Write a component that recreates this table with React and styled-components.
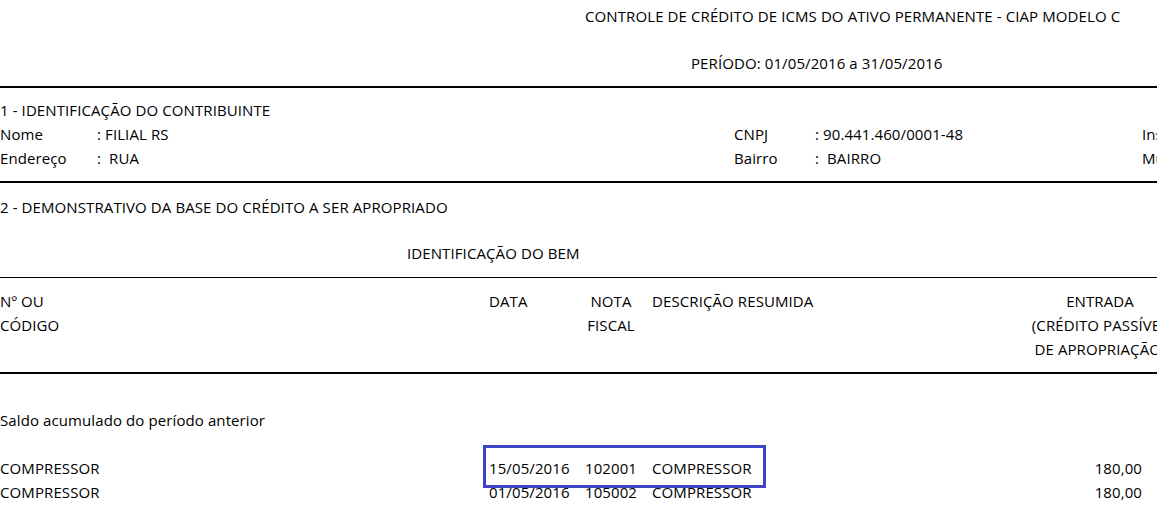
import React from "react";
import styled, { createGlobalStyle } from "styled-components";

const GlobalStyle = createGlobalStyle`
  html, body {
    margin: 0;
    padding: 0;
    background: #ffffff;
  }
  body {
    font-family: "Open Sans", "Noto Sans", sans-serif;
    font-size: 15px;
    letter-spacing: 0.1px;
    line-height: 24px;
    color: #000000;
  }
`;

const Page = styled.div`
  width: 1157px;
  height: 512px;
  overflow: hidden;
  background: #ffffff;
`;

const Report = styled.div`
  width: 1400px;
  padding-top: 4px;
`;

const Title = styled.div`
  padding-left: ${(p) => p.left}px;
  margin-top: ${(p) => p.top || 0}px;
  margin-bottom: ${(p) => p.gap || 0}px;
  white-space: nowrap;
`;

const Rule = styled.hr`
  margin: 0;
  border: 0;
  border-top: ${(p) => (p.thin ? 1 : 2)}px solid #000;
  width: 100%;
`;

const Section = styled.div`
  padding-top: ${(p) => p.top}px;
  padding-bottom: ${(p) => p.bottom}px;
`;

const Spacer = styled.div`
  height: ${(p) => p.h}px;
`;

const InfoGrid = styled.div`
  display: grid;
  grid-template-columns: 97px 637px 81px 327px auto;
  white-space: nowrap;
`;

const TableGrid = styled.div`
  display: grid;
  grid-template-columns: 489px 92px 60px 389px 140px;
  white-space: nowrap;
`;

const Cell = styled.div`
  text-align: ${(p) => p.align || "left"};
  padding-left: ${(p) => p.pl || 0}px;
  padding-right: ${(p) => p.pr || 0}px;
`;

const DataRow = styled(TableGrid)`
  position: relative;
`;

const Highlight = styled.div`
  position: absolute;
  left: 483px;
  top: -11px;
  width: 283px;
  height: 43px;
  box-sizing: border-box;
  border: 3px solid #3d45c6;
  pointer-events: none;
`;

const rows = [
  { code: "COMPRESSOR", date: "15/05/2016", nf: "102001", desc: "COMPRESSOR", value: "180,00", selected: true },
  { code: "COMPRESSOR", date: "01/05/2016", nf: "105002", desc: "COMPRESSOR", value: "180,00" },
];

export default function App() {
  return (
    <Page>
      <GlobalStyle />
      <Report>
        <Title left={585} gap={23}>
          CONTROLE DE CRÉDITO DE ICMS DO ATIVO PERMANENTE - CIAP MODELO C
        </Title>
        <Title left={691} gap={11}>
          PERÍODO: 01/05/2016 a 31/05/2016
        </Title>
        <Rule />

        <Section top={10} bottom={11}>
          <div>1 - IDENTIFICAÇÃO DO CONTRIBUINTE</div>
          <InfoGrid>
            <Cell>Nome</Cell>
            <Cell>: FILIAL RS</Cell>
            <Cell>CNPJ</Cell>
            <Cell>: 90.441.460/0001-48</Cell>
            <Cell>Inscrição Estadual</Cell>
            <Cell>Endereço</Cell>
            <Cell>:&nbsp; RUA</Cell>
            <Cell>Bairro</Cell>
            <Cell>:&nbsp; BAIRRO</Cell>
            <Cell>Município</Cell>
          </InfoGrid>
        </Section>
        <Rule />

        <Section top={12} bottom={12}>
          <div>2 - DEMONSTRATIVO DA BASE DO CRÉDITO A SER APROPRIADO</div>
          <Title left={407} top={22}>
            IDENTIFICAÇÃO DO BEM
          </Title>
        </Section>
        <Rule thin />

        <Section top={11} bottom={11}>
          <TableGrid>
            <Cell>
              Nº OU
              <br />
              CÓDIGO
            </Cell>
            <Cell>DATA</Cell>
            <Cell align="center">
              NOTA
              <br />
              FISCAL
            </Cell>
            <Cell pl={11}>DESCRIÇÃO RESUMIDA</Cell>
            <Cell align="center">
              ENTRADA
              <br />
              (CRÉDITO PASSÍVEL
              <br />
              DE APROPRIAÇÃO)
            </Cell>
          </TableGrid>
        </Section>
        <Rule />

        <Section top={34} bottom={0}>
          <div>Saldo acumulado do período anterior</div>
          <Spacer h={24} />
          {rows.map((r) => (
            <DataRow key={r.nf}>
              {r.selected && <Highlight />}
              <Cell>{r.code}</Cell>
              <Cell>{r.date}</Cell>
              <Cell align="center">{r.nf}</Cell>
              <Cell pl={11}>{r.desc}</Cell>
              <Cell align="right" pr={28}>{r.value}</Cell>
            </DataRow>
          ))}
        </Section>
      </Report>
    </Page>
  );
}
